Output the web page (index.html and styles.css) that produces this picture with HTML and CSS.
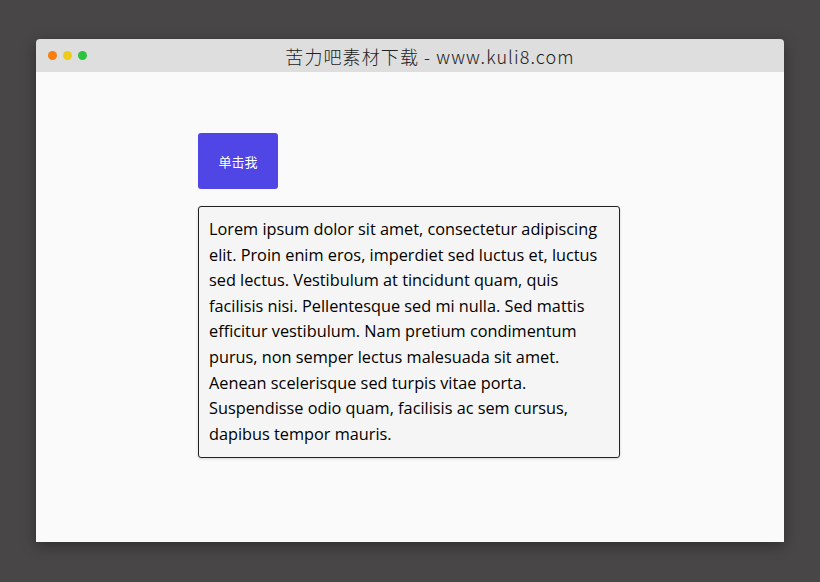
FILE: index.html
```html
<!DOCTYPE html>
<html lang="zh">
<head>
<meta charset="utf-8">
<title>苦力吧素材下载</title>
<link rel="stylesheet" href="styles.css">
</head>
<body>
<div class="window">
  <div class="titlebar">
    <div class="dots">
      <span class="dot dot-orange"></span>
      <span class="dot dot-yellow"></span>
      <span class="dot dot-green"></span>
    </div>
    <div class="title">苦力吧素材下载 - www.kuli8.com</div>
  </div>
  <div class="content">
    <button class="btn" type="button">单击我</button>
    <div class="textbox">Lorem ipsum dolor sit amet, consectetur adipiscing elit. Proin enim eros, imperdiet sed luctus et, luctus sed lectus. Vestibulum at tincidunt quam, quis facilisis nisi. Pellentesque sed mi nulla. Sed mattis efficitur vestibulum. Nam pretium condimentum purus, non semper lectus malesuada sit amet. Aenean scelerisque sed turpis vitae porta. Suspendisse odio quam, facilisis ac sem cursus, dapibus tempor mauris.</div>
  </div>
</div>
</body>
</html>
```
FILE: styles.css
```css
html, body {
  margin: 0;
  padding: 0;
}
body {
  width: 820px;
  height: 582px;
  background: #484646;
  padding: 39px 36px 0;
  box-sizing: border-box;
  font-family: "Open Sans", "Noto Sans CJK SC", sans-serif;
}
.window {
  width: 748px;
  height: 503px;
  border-radius: 4px 4px 0 0;
  overflow: hidden;
  box-shadow: 0 4px 14px rgba(0, 0, 0, 0.35);
  display: flex;
  flex-direction: column;
}
.titlebar {
  height: 33px;
  background: #dedede;
  display: flex;
  align-items: center;
}
.dots {
  display: flex;
  gap: 6px;
  padding-left: 12px;
  width: 75px;
}
.dot {
  width: 9px;
  height: 9px;
  border-radius: 50%;
}
.dot-orange { background: #fb7d0c; }
.dot-yellow { background: #eccb1c; }
.dot-green { background: #2dc33c; }
.title {
  flex: 1;
  text-align: center;
  padding-right: 47px;
  font-family: "Noto Sans CJK SC", sans-serif;
  font-weight: 300;
  font-size: 18px;
  color: #222;
  letter-spacing: 1.1px;
}
.content {
  flex: 1;
  background: #fafafa;
  padding: 61px 162px 0;
  display: flex;
  flex-direction: column;
  align-items: flex-start;
  gap: 17px;
}
.btn {
  width: 80px;
  height: 56px;
  border: none;
  border-radius: 3px;
  background: #4f46e5;
  color: #fff;
  font-family: "Noto Sans CJK SC", sans-serif;
  font-size: 13px;
  padding: 0;
}
.textbox {
  width: 400px;
  padding: 10px;
  border: 1px solid #222;
  border-radius: 3px;
  background: #f5f5f5;
  box-shadow: 0 1px 3px rgba(0, 0, 0, 0.15);
  font-family: "Open Sans", sans-serif;
  font-size: 16.3px;
  line-height: 25.6px;
  color: #000;
}
```
